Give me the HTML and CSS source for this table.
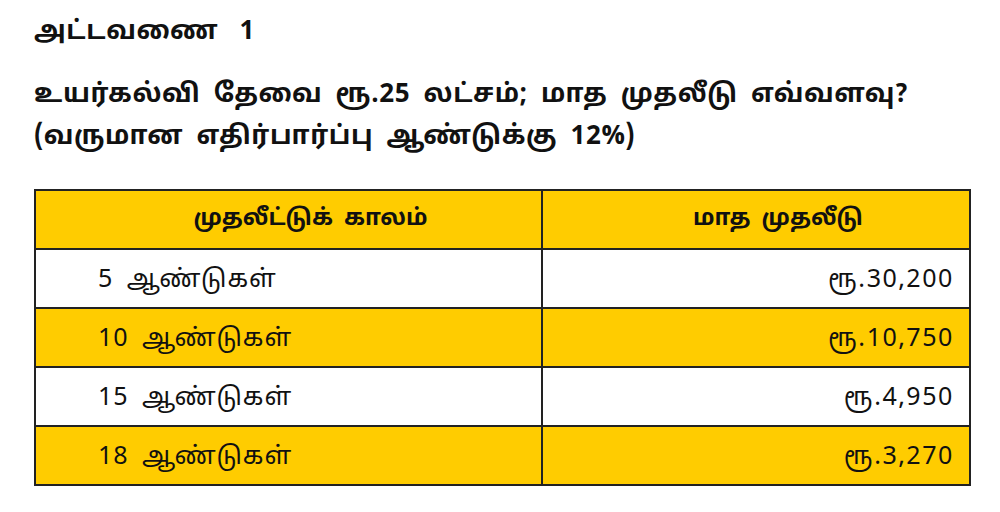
FILE: index.html
```html
<!DOCTYPE html>
<html lang="ta">
<head>
<meta charset="utf-8">
<link rel="stylesheet" href="styles.css">
</head>
<body>
<main class="page">
  <h1 class="title">அட்டவணை 1</h1>
  <h2 class="question">உயர்கல்வி தேவை ரூ.25 லட்சம்; மாத முதலீடு எவ்வளவு?<br>(வருமான எதிர்பார்ப்பு ஆண்டுக்கு 12%)</h2>
  <table class="plan">
    <thead>
      <tr class="yellow">
        <th class="head-period">முதலீட்டுக் காலம்</th>
        <th class="head-amount">மாத முதலீடு</th>
      </tr>
    </thead>
    <tbody>
      <tr class="white"><td class="period">5 ஆண்டுகள்</td><td class="amount">ரூ.30,200</td></tr>
      <tr class="yellow"><td class="period">10 ஆண்டுகள்</td><td class="amount">ரூ.10,750</td></tr>
      <tr class="white"><td class="period">15 ஆண்டுகள்</td><td class="amount">ரூ.4,950</td></tr>
      <tr class="yellow"><td class="period">18 ஆண்டுகள்</td><td class="amount">ரூ.3,270</td></tr>
    </tbody>
  </table>
</main>
</body>
</html>
```
FILE: styles.css
```css
html, body {
  margin: 0;
  padding: 0;
  background: #ffffff;
}
body {
  font-family: "Noto Sans Tamil", "Lohit Tamil", "Noto Sans", "DejaVu Sans", sans-serif;
  color: #111111;
}
.page {
  padding: 17px 29px 0 34px;
}
.title {
  margin: 0;
  font-size: 26px;
  line-height: 32px;
  font-weight: 700;
  word-spacing: 14px;
  letter-spacing: 0.6px;
}
.question {
  margin: 26px 0 0 0;
  font-size: 26px;
  line-height: 42px;
  font-weight: 700;
  word-spacing: 6px;
  letter-spacing: 0.6px;
}
.plan {
  margin-top: 30px;
  width: 937px;
  border-collapse: collapse;
  border: 2px solid #222222;
  table-layout: fixed;
}
.plan th, .plan td {
  border: 2px solid #222222;
  padding: 0;
}
.plan th {
  height: 57px;
  font-size: 23px;
  font-weight: 700;
  text-align: center;
  word-spacing: 5px;
}
.head-period {
  width: 461px;
  padding-left: 44px !important;
}
.head-amount {
  padding-left: 44px !important;
}
.plan td {
  height: 54px;
  font-size: 25px;
  font-weight: 400;
  letter-spacing: 1px;
  word-spacing: 6px;
  padding-top: 3px;
}
.yellow {
  background: #ffcc00;
}
.white {
  background: #ffffff;
}
.period {
  padding-left: 62px !important;
  text-align: left;
}
.amount {
  padding-right: 15px !important;
  text-align: right;
  letter-spacing: 1.6px !important;
}
```
